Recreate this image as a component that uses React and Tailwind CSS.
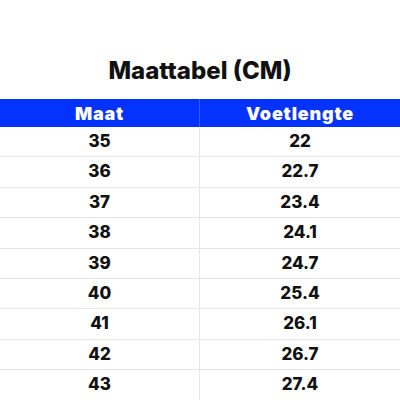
const rows = [
  ['35', '22'],
  ['36', '22.7'],
  ['37', '23.4'],
  ['38', '24.1'],
  ['39', '24.7'],
  ['40', '25.4'],
  ['41', '26.1'],
  ['42', '26.7'],
  ['43', '27.4'],
];

export default function App() {
  return (
    <div className="w-[400px] h-[400px] overflow-hidden bg-white font-['Inter',sans-serif] text-[#111]">
      <h1 className="pt-[56px] h-[99px] text-center text-[24px] font-extrabold leading-[30px]">
        Maattabel (CM)
      </h1>
      <div className="grid grid-cols-2 h-[28px] bg-[#0433ff] text-white font-black text-[18px] tracking-[0.8px]">
        <div className="flex items-center justify-center border-r border-[#3a5cff]">Maat</div>
        <div className="flex items-center justify-center">Voetlengte</div>
      </div>
      {rows.map(([maat, voet]) => (
        <div key={maat} className="grid grid-cols-2 h-[30.4px] border-b border-[#e6e6e6] text-[17px] font-extrabold">
          <div className="flex items-center justify-center border-r border-[#e6e6e6]">{maat}</div>
          <div className="flex items-center justify-center">{voet}</div>
        </div>
      ))}
    </div>
  );
}
